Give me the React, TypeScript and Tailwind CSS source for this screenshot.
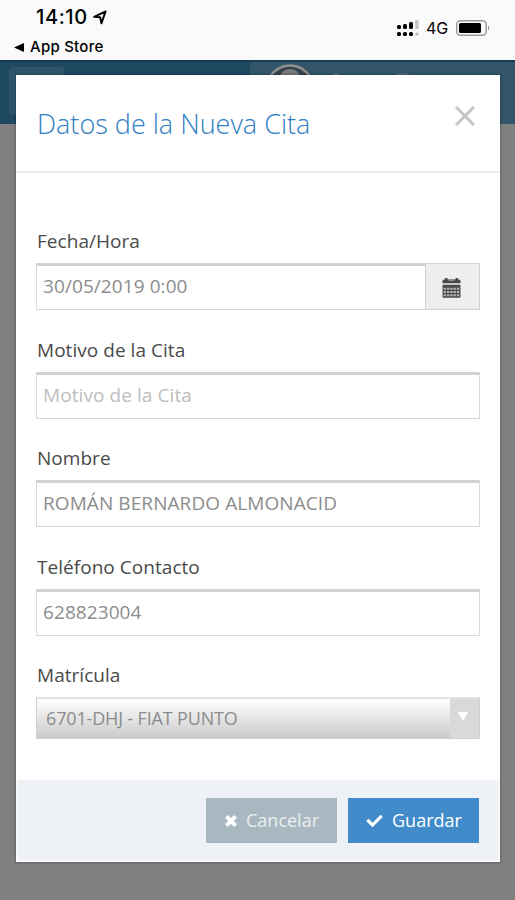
import type { ReactNode } from 'react';
import { FaCheck } from 'react-icons/fa';

const inputClass =
    'block w-full h-[47px] border border-[#d9d9d9] border-t-[3px] border-t-[#d2d2d2] bg-white px-[6px] pb-[3px] text-[19px] tracking-[0.08px] text-[#8c8c8c] placeholder:text-[#bdbdbd] outline-none';

function Field({ label, children }: { label: string; children: ReactNode }) {
    return (
        <div className="h-[108.5px]">
            <label className="block h-[35px] pl-px text-[19px] leading-[26px] tracking-[0.04px] text-[#4a4a4a] whitespace-nowrap">{label}</label>
            {children}
        </div>
    );
}

function StatusBar() {
    return (
        <div className="h-[60px] bg-[#fafafa] flex justify-between font-['Inter',sans-serif] text-black">
            <div className="pl-[14px] pt-[5px]">
                <div className="flex items-center pl-[22px] h-[25px]">
                    <span className="text-[20px] leading-[25px] font-medium tracking-[0.6px]">14:10</span>
                    <svg className="w-[14px] h-[15px] ml-[5px]" viewBox="0 0 14 15" fill="none" stroke="currentColor" strokeWidth="1.9" strokeLinejoin="round">
                        <path d="M12.6 1.4L1.2 6.9L7.2 7.3L8.4 13.4Z" />
                    </svg>
                </div>
                <div className="flex items-center h-[34px]">
                    <svg className="w-[10px] h-[9px] mr-[6px]" viewBox="0 0 10 9" fill="currentColor">
                        <path d="M10 0V9L0 4.5Z" />
                    </svg>
                    <span className="text-[15px] font-medium tracking-[0.25px]">App Store</span>
                </div>
            </div>
            <div className="flex items-center pr-[25px] h-[56px]">
                <svg className="w-[22px] h-[17px]" viewBox="0 0 22 17" fill="currentColor">
                    <rect x="0" y="5" width="4" height="4" rx="1.5" />
                    <rect x="6" y="4" width="4" height="5" rx="1.5" />
                    <rect x="12" y="2" width="4" height="7" rx="1.5" />
                    <rect x="18.3" y="0" width="3.2" height="9" rx="1" fill="#c4c4c4" />
                    <rect x="0" y="12" width="4" height="4" rx="1.5" />
                    <rect x="6" y="12" width="4" height="4" rx="1.5" />
                    <rect x="12" y="12" width="4" height="4" rx="1.5" />
                    <rect x="18.3" y="12.5" width="3.2" height="3.2" rx="1" fill="#c4c4c4" />
                </svg>
                <span className="ml-[7px] w-[23px] text-[16px]">4G</span>
                <svg className="w-[34px] h-[16px] ml-[7px]" viewBox="0 0 34 16">
                    <rect x="0.8" y="0.8" width="29.4" height="14.4" rx="3.5" fill="none" stroke="#9b9b9b" strokeWidth="1.5" />
                    <rect x="3" y="3" width="22" height="10" rx="1.5" fill="#000" />
                    <path d="M32 5.5C33.8 6.5 33.8 9.5 32 10.5Z" fill="#9b9b9b" />
                </svg>
            </div>
        </div>
    );
}

function PageHeader() {
    return (
        <div className="h-[64px] flex bg-[#1f4961] border-t-2 border-[#153b55] overflow-hidden">
            <div className="w-[250px] pl-[9px] pt-[5px]">
                <div className="w-[55px] h-[48px] rounded-[4px] bg-[#2e546b]" />
            </div>
            <div className="flex-1 flex pl-[15px] pt-[2px] bg-[#325569]">
                <svg className="w-[50px] h-[50px]" viewBox="0 0 50 50">
                    <circle cx="25" cy="25" r="23.5" fill="#34424b" stroke="#8e8e8e" strokeWidth="2.5" />
                    <circle cx="25" cy="16" r="11" fill="#77797a" />
                </svg>
                <div className="flex gap-[58px] pl-[18px] pt-[9px]">
                    <div className="w-[6px] h-[14px] bg-[#536f80]" />
                    <div className="w-[12px] h-[14px] bg-[#4b697b]" />
                </div>
            </div>
        </div>
    );
}

function CalendarIcon() {
    return (
        <svg className="w-[19px] h-[20px]" viewBox="0 0 19 20">
            <path d="M0.5 5.2V3Q0.5 1.5 2 1.5H17Q18.5 1.5 18.5 3V5.2Z" fill="#4a4a4a" />
            <path d="M4.2 0V3.4M14.8 0V3.4" stroke="#4a4a4a" strokeWidth="2.6" />
            <path d="M6.5 2.2H12.5" stroke="#8d8d8d" strokeWidth="1.6" />
            <rect x="0.5" y="6.8" width="18" height="13" rx="1" fill="#4a4a4a" />
            <path d="M1.6 10.8H17.4M1.6 14H17.4M1.6 17.2H17.4" stroke="#b4b4b4" strokeWidth="2" strokeDasharray="2.4 0.9" />
        </svg>
    );
}

export default function App() {
    return (
        <div className="relative w-[515px] h-[900px] bg-[#808080] overflow-hidden font-['Open_Sans',sans-serif]">
            <StatusBar />
            <PageHeader />

            <div className="absolute left-[16px] top-[75px] w-[484px] h-[787px] bg-white flex flex-col shadow-[0_0_2px_1px_rgba(0,0,0,0.22)]">
                <div className="h-[98px] shrink-0 border-b-2 border-[#ececec] pl-[21px] pr-[25px] flex justify-between">
                    <h4 className="pt-[31px] text-[27px] leading-[36px] font-light text-[#2f80c4] whitespace-nowrap">Datos de la Nueva Cita</h4>
                    <button className="h-[20px] mt-[31px]" aria-label="Cerrar">
                        <svg className="w-[20px] h-[20px]" viewBox="0 0 20 20" stroke="#c4c4c4" strokeWidth="3">
                            <path d="M1 1L19 19M19 1L1 19" />
                        </svg>
                    </button>
                </div>

                <div className="flex-1 min-h-0 px-[20px] pt-[55px]">
                    <Field label="Fecha/Hora">
                        <div className="flex">
                            <input className={inputClass} defaultValue="30/05/2019 0:00" />
                            <button className="w-[55px] h-[47px] -ml-px shrink-0 flex items-center justify-center border border-[#d2d2d2] bg-[#eee] pt-[3px] pr-[2px]" aria-label="Calendario">
                                <CalendarIcon />
                            </button>
                        </div>
                    </Field>
                    <Field label="Motivo de la Cita">
                        <input className={inputClass} placeholder="Motivo de la Cita" />
                    </Field>
                    <Field label="Nombre">
                        <input className={inputClass} defaultValue="ROMÁN BERNARDO ALMONACID" />
                    </Field>
                    <Field label="Teléfono Contacto">
                        <input className={inputClass} defaultValue="628823004" />
                    </Field>
                    <Field label="Matrícula">
                        <div className="h-[42px] flex border border-[#d0d0d0] border-t-2 border-t-[#e2e2e2] bg-gradient-to-b from-white to-[#cbcbcb]">
                            <span className="flex-1 pl-[9px] text-[18px] leading-[39px] tracking-[-0.16px] text-[#8c8c8c] whitespace-nowrap">6701-DHJ - FIAT PUNTO</span>
                            <span className="w-[29px] bg-[#d9d9d9] flex justify-center pt-[13px] pr-[3px]">
                                <svg className="w-[10px] h-[9px]" viewBox="0 0 10 9" fill="#fff">
                                    <path d="M0 0H10L5 9Z" />
                                </svg>
                            </span>
                        </div>
                    </Field>
                </div>

                <div className="h-[82px] shrink-0 bg-[#eef2f7] border-x-2 border-b-2 border-[#f7f9fb] pl-[18px] pr-[19px] pt-[18px] flex justify-end gap-[11px] text-[18px] text-white">
                    <button className="w-[131px] h-[45px] bg-[#a9b8c0] flex items-center pl-[19px]">
                        <svg className="w-[12px] h-[12px] mr-[9px]" viewBox="0 0 12 12" stroke="currentColor" strokeWidth="4">
                            <path d="M1.4 1.4L10.6 10.6M10.6 1.4L1.4 10.6" />
                        </svg>
                        <span className="text-[#e9eef1]">Cancelar</span>
                    </button>
                    <button className="w-[131px] h-[45px] bg-[#428bca] flex items-center pl-[18px]">
                        <FaCheck className="w-[17px] h-[16px] mr-[9px]" />
                        <span>Guardar</span>
                    </button>
                </div>
            </div>
        </div>
    );
}
